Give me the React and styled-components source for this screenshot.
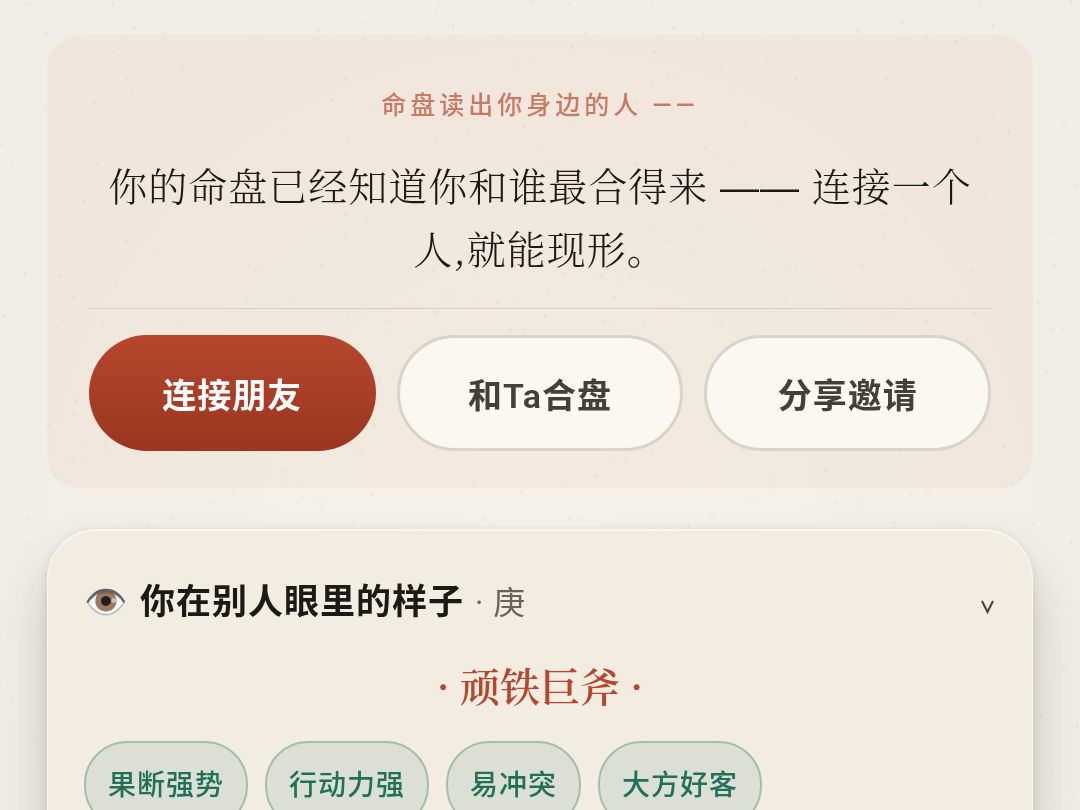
import React, { useState } from "react";
import styled, { createGlobalStyle, css } from "styled-components";

const sans = `Roboto, "Noto Sans CJK SC", sans-serif`;
const serif = `"Noto Serif CJK SC", "Noto Serif SC", "Source Han Serif SC", "Noto Sans CJK SC", serif`;

const GlobalStyle = createGlobalStyle`
  *, *::before, *::after { box-sizing: border-box; }
  body {
    margin: 0;
    background: radial-gradient(ellipse at 50% 65%, #f6f2eb, #f1eee7 75%) fixed;
    color: #1c1a16;
    font-family: ${sans};
  }
  h1, h2, p, ul { margin: 0; padding: 0; }
  button { font-family: inherit; cursor: pointer; }
`;

const Paper = styled.svg`
  position: fixed;
  inset: 0;
  z-index: -1;
  width: 100%;
  height: 100%;
`;

const Page = styled.main`
  display: flex;
  flex-direction: column;
  gap: 41px;
  padding: 35px 47px;
`;

const InviteCard = styled.section`
  padding: 53px 42px 37px;
  border-radius: 34px;
  background: rgba(232, 190, 158, 0.15);
`;

const Kicker = styled.p`
  color: #c97a63;
  font-size: 25px;
  font-weight: 500;
  line-height: 36px;
  letter-spacing: 4px;
  text-align: center;
`;

const Headline = styled.h1`
  margin-top: 29px;
  padding-bottom: 29px;
  border-bottom: 1px solid #d9d0c3;
  font-family: ${serif};
  font-size: 39px;
  font-weight: 300;
  line-height: 63px;
  letter-spacing: 1px;
  text-align: center;
`;

const Phrase = styled.span`
  ${(p) =>
    p.$dash &&
    css`
      font-family: "Liberation Sans", Arial, sans-serif;
      line-height: 1;
    `}
`;

const Actions = styled.div`
  display: grid;
  grid-template-columns: repeat(3, 1fr);
  gap: 21px;
  margin-top: 26px;
`;

const ActionButton = styled.button`
  height: 116px;
  padding: 0;
  border: 3px solid #dbd3c5;
  border-radius: 58px;
  background: #fbf8f1;
  color: #444038;
  font-size: 34px;
  font-weight: 600;
  letter-spacing: 1px;
  ${(p) =>
    p.$primary &&
    css`
      border: 0;
      background: linear-gradient(180deg, #b5472e, #9b3520);
      color: #fff;
    `}
`;

const TraitCard = styled.section`
  padding: 47px 37px 36px;
  border-radius: 50px;
  background: #f3ece0;
  box-shadow: inset 0 1px 0 1px rgba(255, 255, 255, 0.5), 0 2px 8px rgba(60, 55, 40, 0.12),
    0 32px 50px rgba(60, 55, 40, 0.24);
`;

const TraitToggle = styled.button`
  display: flex;
  align-items: center;
  width: 100%;
  padding: 2px 0 0;
  border: 0;
  background: none;
  color: inherit;
  line-height: 50px;
  text-align: left;
`;

const Eye = styled.span`
  width: 44px;
  margin-right: 12px;
  font-size: 35px;
`;

const TraitTitle = styled.span`
  font-size: 35px;
  font-weight: 600;
  letter-spacing: 1px;
`;

const Stem = styled.span`
  flex: 1;
  margin-left: 11px;
  color: #69645a;
  font-size: 32px;
  letter-spacing: 1px;
`;

const Chevron = styled.svg`
  width: 16px;
  height: 16px;
  margin-top: 8px;
`;

const Archetype = styled.h2`
  margin: 27px 0 26px;
  color: #b5472e;
  font-family: ${serif};
  font-size: 40px;
  font-weight: 600;
  line-height: 60px;
  text-align: center;
`;

const Tags = styled.ul`
  display: flex;
  flex-wrap: wrap;
  gap: 17px;
  list-style: none;
`;

const Tag = styled.li`
  padding: 2px 22px 0;
  border: 2px solid #a1bfae;
  border-radius: 43px;
  background: #dcdfd4;
  color: #21705a;
  font-size: 28px;
  font-weight: 500;
  line-height: 82px;
  letter-spacing: 1px;
`;

function makeSpecks(count, size) {
  let seed = 20113;
  const next = () => {
    seed = (seed * 16807) % 2147483647;
    return seed / 2147483647;
  };
  return Array.from({ length: count }, () => ({
    x: Math.round(next() * size),
    y: Math.round(next() * size),
    o: 0.02 + next() * 0.06,
  }));
}

const specks = makeSpecks(190, 540);
const traits = ["果断强势", "行动力强", "易冲突", "大方好客"];

export default function App() {
  const [open, setOpen] = useState(true);
  return (
    <>
      <GlobalStyle />
      <Paper aria-hidden="true">
        <defs>
          <pattern id="specks" width="540" height="540" patternUnits="userSpaceOnUse">
            {specks.map((s, i) => (
              <circle key={i} cx={s.x} cy={s.y} r="1.5" fill="#505050" opacity={s.o} />
            ))}
          </pattern>
        </defs>
        <rect width="100%" height="100%" fill="url(#specks)" />
      </Paper>
      <Page>
        <InviteCard>
          <Kicker>命盘读出你身边的人 ——</Kicker>
          <Headline>
            <Phrase>你的命盘已经知道你和谁最合得来</Phrase>
            <Phrase $dash> —— </Phrase>
            <Phrase>连接一个</Phrase>
            <Phrase>人,就能现形。</Phrase>
          </Headline>
          <Actions>
            <ActionButton $primary>连接朋友</ActionButton>
            <ActionButton>和Ta合盘</ActionButton>
            <ActionButton>分享邀请</ActionButton>
          </Actions>
        </InviteCard>
        <TraitCard>
          <TraitToggle aria-expanded={open} onClick={() => setOpen(!open)}>
            <Eye aria-hidden="true">👁️</Eye>
            <TraitTitle>你在别人眼里的样子</TraitTitle>
            <Stem>· 庚</Stem>
            <Chevron viewBox="0 0 16 16" fill="none" stroke="#45423a" strokeWidth="2" aria-hidden="true">
              <path d="M2 2 L7.5 13 L13 2" />
            </Chevron>
          </TraitToggle>
          {open && (
            <>
              <Archetype>· 顽铁巨斧 ·</Archetype>
              <Tags>
                {traits.map((t) => (
                  <Tag key={t}>{t}</Tag>
                ))}
              </Tags>
            </>
          )}
        </TraitCard>
      </Page>
    </>
  );
}
